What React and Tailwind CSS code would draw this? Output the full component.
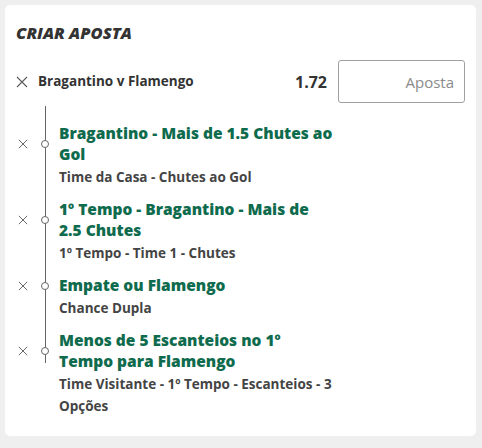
import React from "react";

const selections = [
  {
    title: ["Bragantino - Mais de 1.5 Chutes ao", "Gol"],
    market: ["Time da Casa - Chutes ao Gol"],
  },
  {
    title: ["1º Tempo - Bragantino - Mais de", "2.5 Chutes"],
    market: ["1º Tempo - Time 1 - Chutes"],
  },
  {
    title: ["Empate ou Flamengo"],
    market: ["Chance Dupla"],
  },
  {
    title: ["Menos de 5 Escanteios no 1º", "Tempo para Flamengo"],
    market: ["Time Visitante - 1º Tempo - Escanteios - 3", "Opções"],
  },
];

const CloseIcon = ({ size = 12 }) => (
  <svg width={size} height={size} viewBox="0 0 12 12" className="shrink-0">
    <path d="M1 1L11 11M11 1L1 11" stroke="#5a5a5a" strokeWidth="1.1" fill="none" />
  </svg>
);

// keeps the wrap points of the original slip
const Lines = ({ lines }) =>
  lines.map((l, i) => (
    <span key={i} className="block whitespace-nowrap">
      {l}
    </span>
  ));

const App = () => {
  return (
    <div
      className="w-[482px] h-[448px] bg-[#efefef] pt-[5px] pl-[5px]"
      style={{ fontFamily: '"Open Sans", "Noto Sans", sans-serif' }}>
      <div className="relative w-[471px] h-[431px] bg-white rounded-[5px] pt-[18px]">
        {/* TITLE */}
        <h2 className="pl-[11px] text-[16.5px] leading-[20px] font-extrabold italic text-[#333]">
          CRIAR APOSTA
        </h2>

        {/* MATCH ROW */}
        <div className="flex items-center mt-[17px] pl-[11px] pr-[11px]">
          <CloseIcon />
          <span className="ml-[10px] text-[13.5px] font-bold text-[#333]">
            Bragantino v Flamengo
          </span>
          <span className="ml-auto mr-[11px] text-[16px] font-bold text-[#333]">
            1.72
          </span>
          <input
            type="text"
            placeholder="Aposta"
            className="w-[127px] h-[43px] border border-[#a0a0a0] rounded-[3px] px-[10px] text-right text-[15px] placeholder:text-[#8a8a8a] outline-none"
          />
        </div>

        {/* TIMELINE LINE */}
        <div className="absolute left-[40px] top-[101px] h-[257px] w-px bg-[#666]" />

        {/* SELECTIONS */}
        <div className="flex flex-col gap-[11px] mt-[20px]">
          {selections.map((s) => (
            <div key={s.title[0]} className="flex flex-col">
              <div className="flex items-center">
                <span className="ml-[13px]">
                  <CloseIcon size={10} />
                </span>
                <span className="relative ml-[13px] w-[8px] h-[8px] rounded-full border border-[#666] bg-white shrink-0" />
                <h3 className="ml-[10px] text-[15.5px] leading-[21px] font-extrabold text-[#0f6b4d]">
                  <Lines lines={s.title} />
                </h3>
              </div>
              <p className="pl-[54px] pt-[1px] text-[13.5px] leading-[22px] font-bold text-[#444]">
                <Lines lines={s.market} />
              </p>
            </div>
          ))}
        </div>
      </div>
    </div>
  );
};

export default App;
